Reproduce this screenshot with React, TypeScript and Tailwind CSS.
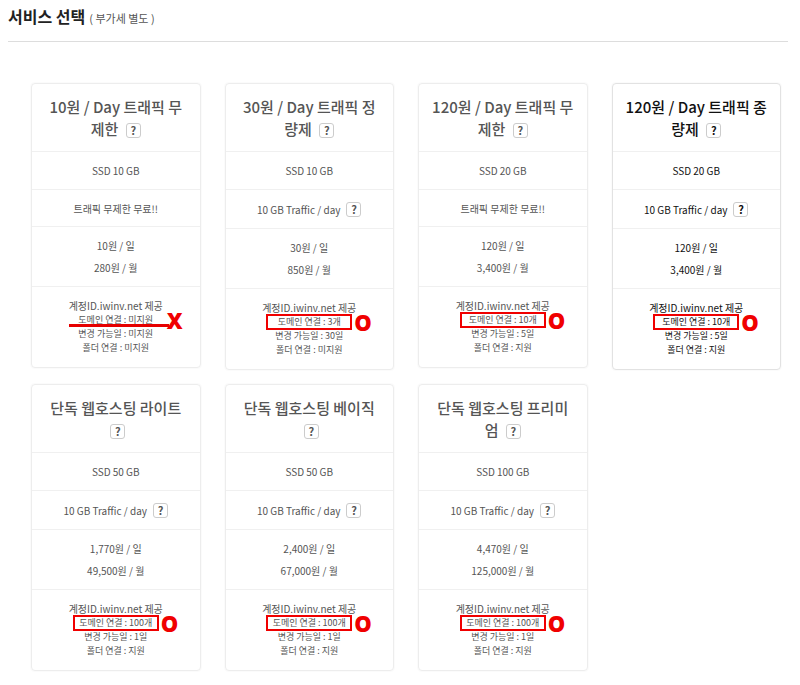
import clsx from 'clsx'

interface Plan {
  id: string
  title: string
  disk: string
  traffic: string
  trafficHelp?: boolean
  daily: string
  monthly: string
  domain: string
  domainAvailable: boolean
  changeDays: string
  folder: string
  active?: boolean
}

const plans: Plan[] = [
  {
    id: 'day-10',
    title: '10원 / Day 트래픽 무제한',
    disk: 'SSD 10 GB',
    traffic: '트래픽 무제한 무료!!',
    daily: '10원 / 일',
    monthly: '280원 / 월',
    domain: '미지원',
    domainAvailable: false,
    changeDays: '미지원',
    folder: '미지원',
  },
  {
    id: 'day-30',
    title: '30원 / Day 트래픽 정량제',
    disk: 'SSD 10 GB',
    traffic: '10 GB Traffic / day',
    trafficHelp: true,
    daily: '30원 / 일',
    monthly: '850원 / 월',
    domain: '3개',
    domainAvailable: true,
    changeDays: '30일',
    folder: '미지원',
  },
  {
    id: 'day-120',
    title: '120원 / Day 트래픽 무제한',
    disk: 'SSD 20 GB',
    traffic: '트래픽 무제한 무료!!',
    daily: '120원 / 일',
    monthly: '3,400원 / 월',
    domain: '10개',
    domainAvailable: true,
    changeDays: '5일',
    folder: '지원',
  },
  {
    id: 'day-120-metered',
    title: '120원 / Day 트래픽 종량제',
    disk: 'SSD 20 GB',
    traffic: '10 GB Traffic / day',
    trafficHelp: true,
    daily: '120원 / 일',
    monthly: '3,400원 / 월',
    domain: '10개',
    domainAvailable: true,
    changeDays: '5일',
    folder: '지원',
    active: true,
  },
  {
    id: 'solo-lite',
    title: '단독 웹호스팅 라이트',
    disk: 'SSD 50 GB',
    traffic: '10 GB Traffic / day',
    trafficHelp: true,
    daily: '1,770원 / 일',
    monthly: '49,500원 / 월',
    domain: '100개',
    domainAvailable: true,
    changeDays: '1일',
    folder: '지원',
  },
  {
    id: 'solo-basic',
    title: '단독 웹호스팅 베이직',
    disk: 'SSD 50 GB',
    traffic: '10 GB Traffic / day',
    trafficHelp: true,
    daily: '2,400원 / 일',
    monthly: '67,000원 / 월',
    domain: '100개',
    domainAvailable: true,
    changeDays: '1일',
    folder: '지원',
  },
  {
    id: 'solo-premium',
    title: '단독 웹호스팅 프리미엄',
    disk: 'SSD 100 GB',
    traffic: '10 GB Traffic / day',
    trafficHelp: true,
    daily: '4,470원 / 일',
    monthly: '125,000원 / 월',
    domain: '100개',
    domainAvailable: true,
    changeDays: '1일',
    folder: '지원',
  },
]

export default function App() {
  return (
    <main className="bg-white pb-3 font-['Noto_Sans_CJK_KR','Noto_Sans',sans-serif]">
      <header className="mr-3 ml-2 flex items-baseline gap-1 border-b border-[#dddddd] pt-1 pb-[13px]">
        <h1 className="text-base leading-6 font-bold text-[#222222]">서비스 선택</h1>
        <span className="text-[11px] text-[#555555]">( 부가세 별도 )</span>
      </header>

      <section className="mt-[41px] mr-[19px] ml-[31px] grid grid-cols-4 items-start gap-x-6 gap-y-3.5">
        {plans.map((plan) => (
          <PlanCard key={plan.id} plan={plan} />
        ))}
      </section>
    </main>
  )
}

function PlanCard({ plan }: { plan: Plan }) {
  return (
    <article
      className={clsx(
        'divide-y divide-[#f0f0f0] rounded border text-center text-[10px] shadow-[0_0_2px_#eeeeee]',
        plan.active ? 'border-[#e2e2e2] text-[#111111]' : 'border-[#ededed] text-[#555555]',
      )}
    >
      <h2 className="px-3 pt-3 pb-[11px] text-[15px] leading-[22px] font-medium">
        {plan.title} <HelpButton label={plan.title} className="ml-1" />
      </h2>
      <p className="py-2.5 leading-[17px]">{plan.disk}</p>
      <div className={clsx('flex items-center justify-center gap-1.5', plan.trafficHelp ? 'h-[39px]' : 'h-[37px]')}>
        {plan.traffic}
        {plan.trafficHelp && <HelpButton label={plan.traffic} />}
      </div>
      <div className="pt-2 pb-[7px] leading-[22px]">
        <p>{plan.daily}</p>
        <p>{plan.monthly}</p>
      </div>
      <div className="py-3 text-[9px] leading-[14px]">
        <p className="text-[10px] leading-[14px]">계정ID.iwinv.net 제공</p>
        <DomainLine value={plan.domain} available={plan.domainAvailable} />
        <p>변경 가능일 : {plan.changeDays}</p>
        <p>폴더 연결 : {plan.folder}</p>
      </div>
    </article>
  )
}

function DomainLine({ value, available }: { value: string; available: boolean }) {
  return (
    <p className="relative mx-auto w-[86px]">
      도메인 연결 : {value}
      {available ? (
        <>
          <span className="absolute inset-x-0 -inset-y-px border-2 border-[#f00000]" />
          <Mark className="ml-0.5">O</Mark>
        </>
      ) : (
        <>
          <span className="absolute -right-2.5 bottom-0 -left-1 h-[3px] bg-[#e60000]" />
          <Mark className="ml-2">X</Mark>
        </>
      )}
    </p>
  )
}

function Mark({ children, className }: { children: string; className?: string }) {
  return (
    <strong
      className={clsx(
        "absolute top-1/2 left-full -translate-y-1/2 font-['Open_Sans',sans-serif] text-[22px] leading-6 font-extrabold text-[#f00000]",
        className,
      )}
    >
      {children}
    </strong>
  )
}

function HelpButton({ label, className }: { label: string; className?: string }) {
  return (
    <button
      type="button"
      aria-label={`${label} 도움말`}
      className={clsx(
        'inline-flex h-[15px] w-[15px] items-center justify-center rounded-[3px] border border-[#cccccc] align-middle text-[11px] leading-none font-bold',
        className,
      )}
    >
      ?
    </button>
  )
}
